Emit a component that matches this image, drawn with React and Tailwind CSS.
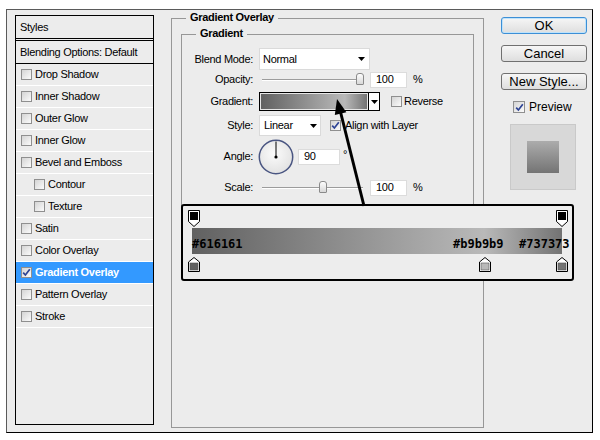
import React from 'react';

const gradBg = 'bg-[linear-gradient(to_right,#616161_0%,#b9b9b9_79%,#737373_100%)]';

const layers = [
  { name: 'Drop Shadow' },
  { name: 'Inner Shadow' },
  { name: 'Outer Glow' },
  { name: 'Inner Glow' },
  { name: 'Bevel and Emboss' },
  { name: 'Contour', indent: true },
  { name: 'Texture', indent: true },
  { name: 'Satin' },
  { name: 'Color Overlay' },
  { name: 'Gradient Overlay', checked: true, selected: true },
  { name: 'Pattern Overlay' },
  { name: 'Stroke' },
];

function CheckBox({ checked, big }) {
  return (
    <span
      className={
        (big ? 'w-[12px] h-[12px]' : 'w-[11px] h-[11px]') +
        ' shrink-0 border border-[#8f8f8f] bg-[linear-gradient(135deg,#d4d4d4,#fbfbfb)] flex items-center justify-center'
      }
    >
      {checked && (
        <svg width="9" height="9" viewBox="0 0 9 9">
          <path d="M1.2 4.6 L3.4 7 L7.8 1.3" fill="none" stroke="#2d4394" strokeWidth="1.7" />
        </svg>
      )}
    </span>
  );
}

function Arrow() {
  return (
    <svg width="7" height="4" viewBox="0 0 7 4" className="shrink-0">
      <path d="M0 0H7L3.5 4Z" fill="#000" />
    </svg>
  );
}

function Slider({ at }) {
  return (
    <div className="relative ml-[3px] w-[101px] h-full flex items-center">
      <div className="w-full h-[2px] border-t border-[#9c9c9c] border-b border-b-white" />
      <span
        className={
          (at === 'opacity' ? 'left-[94px]' : 'left-[57px]') +
          ' absolute top-[2px] w-[8px] h-[12px] border border-[#8a8a8a] rounded-t-[3px] rounded-b-[1px] bg-[linear-gradient(to_bottom,#fdfdfd,#d8d8d8)]'
        }
      />
    </div>
  );
}

function NumBox({ value, w }) {
  return (
    <div className={(w === 'sm' ? 'w-[42px]' : 'w-[37px]') + ' h-[16px] bg-white border border-[#dcdcdc] flex items-center pl-[5px] leading-none'}>
      {value}
    </div>
  );
}

function Label({ children }) {
  return <div className="w-[72px] text-right pr-[1px]">{children}</div>;
}

function TopStop() {
  return (
    <svg width="12" height="17" viewBox="0 0 12 17">
      <path d="M0.5 0.5H11.5V11.5L6 16.5L0.5 11.5Z" fill="#fff" stroke="#000" />
      <rect x="2" y="2" width="8" height="8" fill="#000" />
    </svg>
  );
}

function BottomStop({ color }) {
  return (
    <svg width="12" height="15" viewBox="0 0 12 15">
      <path d="M6 0.5L11.5 5V14.5H0.5V5Z" fill="#fff" stroke="#000" />
      <rect x="2" y="6" width="8" height="7" fill={color} stroke="#555" strokeWidth="0.6" />
    </svg>
  );
}

export default function App() {
  return (
    <div className="relative w-[600px] h-[440px] bg-white pt-[9px] pl-[6px] font-['Liberation_Sans',Arial,sans-serif] text-[11px] tracking-[-0.3px] text-black">
      <div className="w-[587px] h-[424px] bg-[#ececec] border border-t-[#5a5a5a] border-l-[#5a5a5a] border-b-black border-r-black flex items-start pl-[8px] pt-[5px]">
        {/* styles list */}
        <div className="w-[139px] h-[410px] border border-black flex flex-col">
          <div className="h-[23px] border-b border-black flex items-center pl-[4px]">Styles</div>
          <div className="mt-[1px] h-[24px] border-t border-b border-black flex items-center pl-[4px]">
            Blending Options: Default
          </div>
          {layers.map((l) => (
            <div
              key={l.name}
              className={
                'h-[22px] border-b border-white flex items-center gap-[3px] ' +
                (l.indent ? 'pl-[18px] ' : 'pl-[5px] ') +
                (l.selected ? 'bg-[#3399ff] text-white font-bold' : '')
              }
            >
              <CheckBox checked={l.checked} />
              <span>{l.name}</span>
            </div>
          ))}
        </div>

        {/* gradient overlay settings */}
        <div className="relative ml-[17px] mt-[3px] w-[313px] h-[410px] border border-[#979797]">
          <span className="absolute -top-[8px] left-[14px] px-[4px] leading-[13px] bg-[#ececec] font-bold">
            Gradient Overlay
          </span>
          <div className="relative mx-[9px] mt-[15px] border border-[#979797] pt-[13px] pb-[10px]">
            <span className="absolute -top-[8px] left-[14px] px-[4px] leading-[13px] bg-[#ececec] font-bold">
              Gradient
            </span>

            <div className="h-[22px] flex items-center">
              <Label>Blend Mode:</Label>
              <div className="ml-[5px] w-[111px] h-[22px] bg-white border border-[#dadada] flex items-center justify-between pl-[3px] pr-[4px]">
                <span>Normal</span>
                <Arrow />
              </div>
            </div>

            <div className="mt-[1px] h-[17px] flex items-center">
              <Label>Opacity:</Label>
              <div className="ml-[5px] h-full flex items-center">
                <Slider at="opacity" />
                <div className="ml-[7px]">
                  <NumBox value="100" />
                </div>
                <span className="ml-[6px]">%</span>
              </div>
            </div>

            <div className="mt-[4px] h-[19px] flex items-center">
              <Label>Gradient:</Label>
              <div className="ml-[5px] w-[121px] h-[19px] border border-black flex">
                <div className={'flex-1 border border-[#e6e6e6] ' + gradBg} />
                <div className="w-[11px] border-l border-black bg-white flex items-center justify-center">
                  <Arrow />
                </div>
              </div>
              <div className="ml-[11px] flex items-center gap-[2px]">
                <CheckBox />
                <span>Reverse</span>
              </div>
            </div>

            <div className="mt-[4px] h-[21px] flex items-center">
              <Label>Style:</Label>
              <div className="ml-[5px] w-[62px] h-[21px] bg-white border border-[#dadada] flex items-center justify-between pl-[4px] pr-[3px]">
                <span>Linear</span>
                <Arrow />
              </div>
              <div className="ml-[9px] flex items-center gap-[4px]">
                <CheckBox checked />
                <span>Align with Layer</span>
              </div>
            </div>

            <div className="mt-[3px] h-[35px] flex items-center">
              <Label>Angle:</Label>
              <svg width="36" height="36" viewBox="0 0 36 36" className="ml-[4px]">
                <defs>
                  <radialGradient id="dial" cx="0.45" cy="0.4" r="0.6">
                    <stop offset="0" stopColor="#fbfbfb" />
                    <stop offset="1" stopColor="#e2e2e2" />
                  </radialGradient>
                </defs>
                <circle cx="18" cy="18" r="16.7" fill="url(#dial)" stroke="#4a5682" strokeWidth="1.5" />
                <line x1="18" y1="18" x2="18" y2="2.5" stroke="#000" strokeWidth="1" />
                <circle cx="18" cy="18" r="1.6" fill="#000" />
              </svg>
              <div className="ml-[4px]">
                <NumBox value="90" w="sm" />
              </div>
              <span className="ml-[3px] -mt-[5px] text-[11px]">°</span>
            </div>

            <div className="mt-[5px] h-[17px] flex items-center">
              <Label>Scale:</Label>
              <div className="ml-[5px] h-full flex items-center">
                <Slider at="scale" />
                <div className="ml-[7px]">
                  <NumBox value="100" />
                </div>
                <span className="ml-[6px]">%</span>
              </div>
            </div>
          </div>
        </div>

        {/* buttons */}
        <div className="ml-[17px] mt-[2px] w-[86px] flex flex-col text-[13px] tracking-normal">
          <button className="h-[17px] rounded-[3px] border border-[#3c8fd6] shadow-[inset_0_0_0_1px_#bfe3fb] bg-[linear-gradient(to_bottom,#f6f6f6,#dedede)] leading-none">
            OK
          </button>
          <button className="mt-[11px] h-[17px] rounded-[3px] border border-[#707070] bg-[linear-gradient(to_bottom,#f6f6f6,#dedede)] leading-none">
            Cancel
          </button>
          <button className="mt-[11px] h-[17px] rounded-[3px] border border-[#707070] bg-[linear-gradient(to_bottom,#f6f6f6,#dedede)] leading-none">
            New Style...
          </button>
          <div className="mt-[8px] ml-[12px] flex items-center gap-[4px] text-[12px]">
            <CheckBox checked big />
            <span>Preview</span>
          </div>
          <div className="mt-[8px] ml-[9px] w-[66px] h-[66px] bg-[#d8d8d8] border border-[#c9c9c9] flex items-center justify-center">
            <div className="w-[32px] h-[32px] bg-[linear-gradient(to_bottom,#acacac,#747474)]" />
          </div>
        </div>
      </div>

      {/* gradient editor callout */}
      <div className="absolute left-[181px] top-[204px] w-[393px] h-[77px] border-2 border-black rounded-[3px] bg-[#ededed] flex flex-col">
        <div className="mt-[4px] h-[17px] flex justify-between pl-[5px] pr-[4px]">
          <TopStop />
          <TopStop />
        </div>
        <div className={'relative mt-[1px] ml-[9px] mr-[10px] h-[26px] ' + gradBg}>
          <span className="absolute left-0 top-[10px] leading-[12px] font-['DejaVu_Sans_Mono',monospace] font-bold text-[12px] tracking-normal">
            #616161
          </span>
          <span className="absolute left-[261px] top-[10px] leading-[12px] font-['DejaVu_Sans_Mono',monospace] font-bold text-[12px] tracking-normal">
            #b9b9b9
          </span>
          <span className="absolute left-[327px] top-[10px] leading-[12px] font-['DejaVu_Sans_Mono',monospace] font-bold text-[12px] tracking-normal">
            #737373
          </span>
        </div>
        <div className="relative mt-[3px] h-[15px] flex justify-between pl-[5px] pr-[4px]">
          <BottomStop color="#616161" />
          <span className="absolute left-[296px] top-0">
            <BottomStop color="#b9b9b9" />
          </span>
          <BottomStop color="#737373" />
        </div>
      </div>

      {/* pointer arrow */}
      <svg className="absolute left-0 top-0 pointer-events-none" width="600" height="440" viewBox="0 0 600 440">
        <line x1="340" y1="110" x2="364" y2="206" stroke="#000" strokeWidth="3" />
        <path d="M337 99 L346.4 112.2 L334.8 115 Z" fill="#000" />
      </svg>
    </div>
  );
}
